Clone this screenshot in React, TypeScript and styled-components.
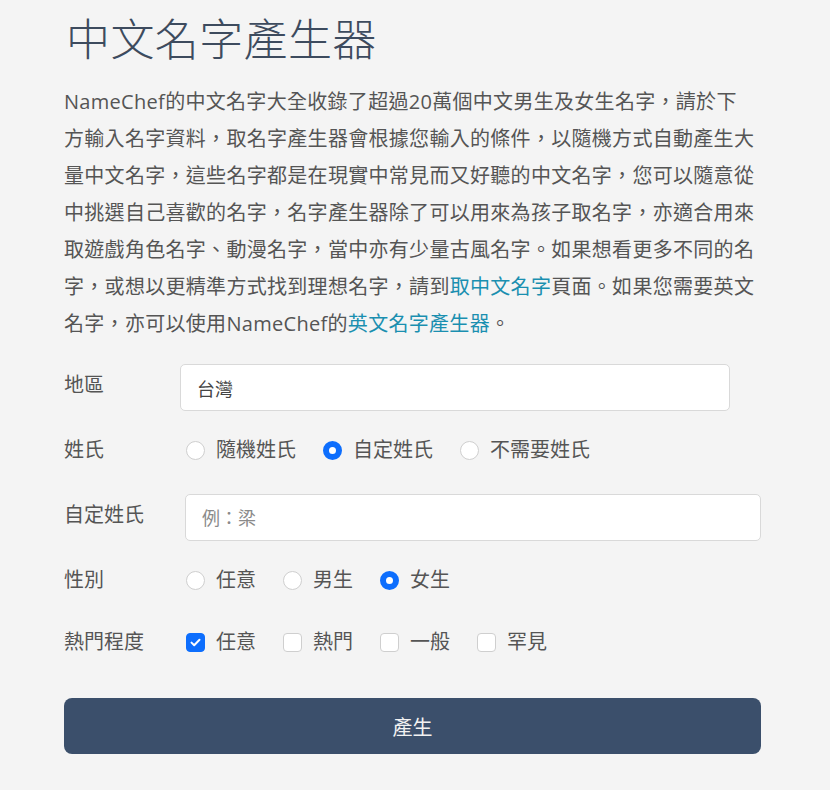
import React from "react";
import styled, { createGlobalStyle } from "styled-components";

const Global = createGlobalStyle`
  html, body { margin: 0; padding: 0; background: #f4f4f4; }
  body { font-family: "Open Sans", "Noto Sans CJK TC", sans-serif; color: #454545; }
`;

const Page = styled.div`
  width: 697px;
  margin-left: 64px;
  padding-top: 8px;
  padding-bottom: 36px;
`;

const Title = styled.h1`
  margin: 0;
  font-family: "Open Sans", "Noto Sans CJK TC", sans-serif;
  font-weight: 300;
  font-size: 44px;
  line-height: 62px;
  color: #3d4b5e;
  padding-left: 2px;
  letter-spacing: 0.4px;
`;

const Intro = styled.p`
  margin: 13px 0 0;
  width: 692px;
  font-size: 20px;
  letter-spacing: 0.3px;
  line-height: 37px;
  color: #555;
`;

const Link = styled.a`
  color: #1a8fb0;
  text-decoration: none;
`;

const Row = styled.div<{ $top: number; $label: number }>`
  display: grid;
  grid-template-columns: ${(p) => p.$label}px 1fr;
  align-items: center;
  margin-top: ${(p) => p.$top}px;
`;

const Label = styled.label<{ $alignTop?: boolean }>`
  font-size: 20px;
  color: #555;
  align-self: ${(p) => (p.$alignTop ? "start" : "center")};
  padding-top: ${(p) => (p.$alignTop ? "6px" : "0")};
  line-height: 30px;
`;

const TextInput = styled.input<{ $width?: number }>`
  box-sizing: border-box;
  height: 47px;
  width: ${(p) => (p.$width ? `${p.$width}px` : "100%")};
  border: 1px solid #d9d9d9;
  border-radius: 5px;
  background: #fff;
  padding: 0 16px;
  font-family: "Open Sans", "Noto Sans CJK TC", sans-serif;
  font-size: 18px;
  color: #444;
  outline: none;
  &::placeholder { color: #8a8a8a; }
`;

const Options = styled.div`
  display: flex;
  align-items: center;
  gap: 27px;
  height: 30px;
  padding-left: 5px;
`;

const Option = styled.label`
  display: flex;
  align-items: center;
  gap: 11px;
  font-size: 20px;
  color: #555;
  line-height: 30px;
`;

const Radio = styled.span<{ $checked?: boolean }>`
  box-sizing: border-box;
  width: 19px;
  height: 19px;
  border-radius: 50%;
  background: #fff;
  border: ${(p) => (p.$checked ? "6px solid #0d6efd" : "1px solid #cfcfcf")};
  flex: none;
`;

const Check = styled.span<{ $checked?: boolean }>`
  box-sizing: border-box;
  width: 19px;
  height: 19px;
  border-radius: 4px;
  background: ${(p) => (p.$checked ? "#0d6efd" : "#fff")};
  border: 1px solid ${(p) => (p.$checked ? "#0d6efd" : "#cfcfcf")};
  display: flex;
  align-items: center;
  justify-content: center;
  flex: none;
`;

const Button = styled.button`
  display: block;
  width: 100%;
  height: 56px;
  margin-top: 41px;
  border: none;
  border-radius: 8px;
  background: #3b4f6b;
  color: #f2f2f2;
  font-family: "Open Sans", "Noto Sans CJK TC", sans-serif;
  font-size: 20px;
`;

const Tick = () => (
  <svg width="11" height="9" viewBox="0 0 11 9" fill="none">
    <path d="M1.5 4.6 L4.2 7.2 L9.5 1.8" stroke="#fff" strokeWidth="2" strokeLinecap="round" strokeLinejoin="round" />
  </svg>
);

const RadioOpt = ({ text, checked }: { text: string; checked?: boolean }) => (
  <Option>
    <Radio $checked={checked} />
    {text}
  </Option>
);

const CheckOpt = ({ text, checked }: { text: string; checked?: boolean }) => (
  <Option>
    <Check $checked={checked}>{checked && <Tick />}</Check>
    {text}
  </Option>
);

export default function App() {
  return (
    <>
      <Global />
      <Page>
        <Title>中文名字產生器</Title>
        <Intro>
          NameChef的中文名字大全收錄了超過20萬個中文男生及女生名字，請於下方輸入名字資料，取名字產生器會根據您輸入的條件，以隨機方式自動產生大量中文名字，這些名字都是在現實中常見而又好聽的中文名字，您可以隨意從中挑選自己喜歡的名字，名字產生器除了可以用來為孩子取名字，亦適合用來取遊戲角色名字、動漫名字，當中亦有少量古風名字。如果想看更多不同的名字，或想以更精準方式找到理想名字，請到
          <Link>取中文名字</Link>頁面。如果您需要英文名字，亦可以使用NameChef的<Link>英文名字產生器</Link>。
        </Intro>
        <Row $top={22} $label={116}>
          <Label $alignTop>地區</Label>
          <TextInput $width={550} defaultValue="台灣" />
        </Row>
        <Row $top={24} $label={117}>
          <Label>姓氏</Label>
          <Options>
            <RadioOpt text="隨機姓氏" />
            <RadioOpt text="自定姓氏" checked />
            <RadioOpt text="不需要姓氏" />
          </Options>
        </Row>
        <Row $top={29} $label={121}>
          <Label $alignTop>自定姓氏</Label>
          <TextInput placeholder="例：梁" />
        </Row>
        <Row $top={24} $label={117}>
          <Label>性別</Label>
          <Options>
            <RadioOpt text="任意" />
            <RadioOpt text="男生" />
            <RadioOpt text="女生" checked />
          </Options>
        </Row>
        <Row $top={32} $label={117}>
          <Label>熱門程度</Label>
          <Options>
            <CheckOpt text="任意" checked />
            <CheckOpt text="熱門" />
            <CheckOpt text="一般" />
            <CheckOpt text="罕見" />
          </Options>
        </Row>
        <Button>產生</Button>
      </Page>
    </>
  );
}
